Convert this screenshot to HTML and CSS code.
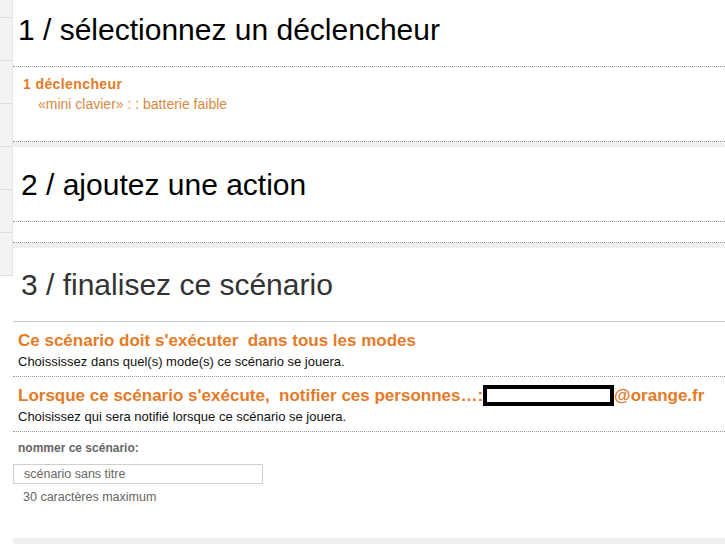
FILE: index.html
```html
<!DOCTYPE html>
<html>

<head>
    <link rel="stylesheet" href="styles.css">
</head>

<body>

    <div class="page">
        <ul class="side">
            <li class="first"></li>
            <li></li>
            <li></li>
            <li></li>
            <li></li>
            <li></li>
            <li></li>
        </ul>

        <div class="main">
            <div class="panel p1">
                <h2 class="step">1 / sélectionnez un déclencheur</h2>
                <div class="triggers">
                    <div class="trig-count">1 déclencheur</div>
                    <div class="trig-item">«mini clavier» : : batterie faible</div>
                </div>
            </div>

            <div class="panel p2">
                <h2 class="step">2 / ajoutez une action</h2>
                <div class="actions"></div>
            </div>

            <div class="panel p3">
                <h2 class="step">3 / finalisez ce scénario</h2>
                <div class="option">
                    <div class="opt-title">Ce scénario doit s'exécuter &nbsp;dans tous les modes</div>
                    <div class="opt-sub">Choississez dans quel(s) mode(s) ce scénario se jouera.</div>
                </div>
                <div class="option">
                    <div class="opt-title">Lorsque ce scénario s'exécute, &nbsp;notifier ces personnes…:<span class="masked"></span>@orange.fr</div>
                    <div class="opt-sub">Choisissez qui sera notifié lorsque ce scénario se jouera.</div>
                </div>
                <div class="naming">
                    <label for="scn-name">nommer ce scénario:</label>
                    <input type="text" id="scn-name" placeholder="scénario sans titre">
                    <div class="hint">30 caractères maximum</div>
                </div>
            </div>
        </div>
    </div>

</body>

</html>
```

FILE: styles.css
```css
body {
    margin: 0;
    font-family: "Liberation Sans", Arial, sans-serif;
    background-color: #fff;
}

.page {
    display: flex;
    height: 544px;
    overflow: hidden;
}

.side {
    list-style-type: none;
    margin: 0;
    padding: 0;
    width: 12px;
    border-right: 1px solid #e4e4e4;
    align-self: flex-start;
}

.side li {
    height: 42px;
    background-color: #f3f3f3;
    border-bottom: 1px solid #dcdcdc;
}

.side li.first {
    height: 17px;
}

.main {
    flex: 1;
    background-color: #efefef;
}

.panel {
    background-color: #fff;
    margin-bottom: 5px;
    border-bottom: 1px dotted #999;
}

.step {
    margin: 0;
    font-size: 30px;
    font-weight: normal;
    line-height: 32px;
    color: #000;
    padding: 22px 0 20px 8px;
    border-bottom: 1px dotted #999;
}

.p1 .step {
    padding: 14px 0 20px 5px;
}

.p3 {
    border-bottom: none;
    height: 290px;
}

.p3 .step {
    color: #333;
    padding: 21px 0 20px 8px;
    border-bottom: 1px solid #ccc;
}

.triggers {
    height: 67px;
    padding: 7px 0 0 10px;
}

.trig-count {
    font-size: 14px;
    font-weight: bold;
    letter-spacing: 0.4px;
    line-height: 20px;
    color: #e57a27;
}

.trig-item {
    font-size: 14px;
    line-height: 20px;
    color: #d9883f;
    padding-left: 15px;
}

.actions {
    height: 20px;
}

.option {
    padding: 9px 0 6px 5px;
    border-bottom: 1px dotted #999;
}

.opt-title {
    font-size: 17px;
    font-weight: bold;
    line-height: 20px;
    color: #e57a27;
}

.masked {
    display: inline-block;
    box-sizing: border-box;
    width: 131px;
    height: 21px;
    border: 4px solid #000;
    background-color: #fff;
    vertical-align: middle;
    margin-top: -3px;
}

.opt-sub {
    font-size: 13px;
    line-height: 16px;
    margin-top: 3px;
    color: #111;
}

.naming label {
    display: block;
    font-size: 12px;
    font-weight: bold;
    line-height: 16px;
    color: #666;
    margin: 8px 0 8px 5px;
}

.naming input[type=text] {
    display: block;
    box-sizing: border-box;
    width: 250px;
    height: 20px;
    margin: 0;
    padding: 0 10px;
    border: 1px solid #d0d0d0;
    font-family: inherit;
    font-size: 12.5px;
}

.naming input::placeholder {
    color: #666;
}

.hint {
    font-size: 12.5px;
    line-height: 16px;
    color: #666;
    margin-top: 5px;
    padding-left: 10px;
}
```
